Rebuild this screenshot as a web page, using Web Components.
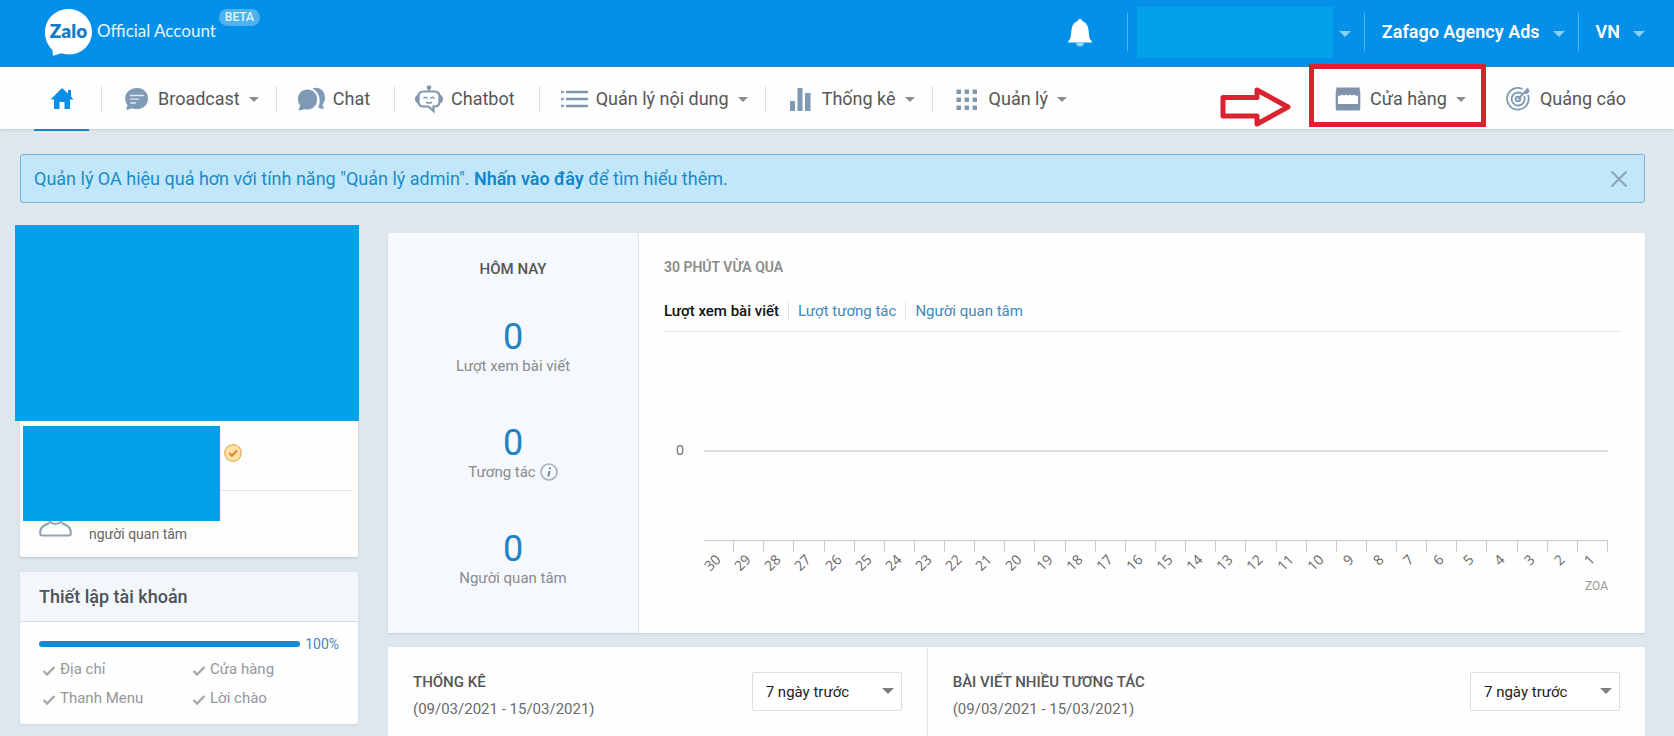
<!DOCTYPE html>
<html lang="vi">
<head>
<meta charset="utf-8">
<meta name="viewport" content="width=device-width, initial-scale=1">
<title>Zalo Official Account</title>
<style>
  body { margin: 0; background: #dfe7ee; font-family: Roboto, "Liberation Sans", sans-serif; font-size: 15px; line-height: 20px; color: #555; }
  .workspace { display: grid; grid-template-columns: 344px minmax(0, 1fr); column-gap: 29px; padding: 22px 29px 0 15px; align-items: start; }
  .side { display: grid; gap: 15px; }
  .main { display: grid; gap: 14px; padding-top: 8px; }
  .panels { display: grid; grid-template-columns: 3fr 4fr; background: #fefefe; border-radius: 2px; }
  oa-panel + oa-panel { border-left: 1px solid #dfe5ea; }
</style>
</head>
<body>
<oa-header>
  <oa-brand></oa-brand>
  <oa-bell></oa-bell>
  <header-menu label="Tài khoản"><account-mask></account-mask></header-menu>
  <header-menu>Zafago Agency Ads</header-menu>
  <header-menu>VN</header-menu>
</oa-header>
<oa-nav>
  <nav-home></nav-home>
  <nav-item icon="broadcast" menu>Broadcast</nav-item>
  <nav-item icon="chat">Chat</nav-item>
  <nav-item icon="bot">Chatbot</nav-item>
  <nav-item icon="list" menu>Quản lý nội dung</nav-item>
  <nav-item icon="bars" menu>Thống kê</nav-item>
  <nav-item icon="grid" menu>Quản lý</nav-item>
  <nav-callout slot="end"><nav-item icon="store" menu plain>Cửa hàng</nav-item></nav-callout>
  <nav-item slot="end" icon="target" plain>Quảng cáo</nav-item>
</oa-nav>
<oa-notice>Quản lý OA hiệu quả hơn với tính năng "Quản lý admin". <a slot="link" href="#admin">Nhấn vào đây</a><span slot="rest"> để tìm hiểu thêm.</span></oa-notice>
<div class="workspace">
  <div class="side">
    <profile-card>người quan tâm</profile-card>
    <setup-card heading="Thiết lập tài khoản" value="100">
      <setup-step>Địa chỉ</setup-step>
      <setup-step>Cửa hàng</setup-step>
      <setup-step>Thanh Menu</setup-step>
      <setup-step>Lời chào</setup-step>
    </setup-card>
  </div>
  <div class="main">
    <oa-overview>
      <today-stat slot="today" value="0">Lượt xem bài viết</today-stat>
      <today-stat slot="today" value="0" info>Tương tác</today-stat>
      <today-stat slot="today" value="0">Người quan tâm</today-stat>
      <minute-chart></minute-chart>
    </oa-overview>
    <div class="panels">
      <oa-panel heading="THỐNG KÊ">(09/03/2021 - 15/03/2021)</oa-panel>
      <oa-panel heading="BÀI VIẾT NHIỀU TƯƠNG TÁC">(09/03/2021 - 15/03/2021)</oa-panel>
    </div>
  </div>
</div>

<script>
const define = (name, render) => customElements.define(name, class extends HTMLElement {
  constructor() {
    super();
    this.attachShadow({ mode: 'open' });
  }
  connectedCallback() {
    this.shadowRoot.innerHTML = `<style>*{box-sizing:border-box}button{font:inherit;color:inherit;background:none;border:0;padding:0;cursor:pointer}</style>` + render(this);
  }
});

const icons = {
  broadcast: `<path fill="#7f9ab5" d="M15 2C8.300 2 3.200 6.500 3.200 12.400c0 2.600.9 4.800 2.400 6.600L4 23.600c2 .2 3.900-.2 5.600-1.300 1.700.6 3.500.8 5.400.8 6.500 0 11-4.500 11-10.600S21.500 2 15 2z"/><path d="M8.500 9.500h13M8.500 13.200h8M8.500 17h5" stroke="#dfe9f1" stroke-width="1.300" stroke-linecap="round"/>`,
  chat: `<path fill="#7f9ab5" d="M15.500 2.600C21-.2 28 3.800 28 11.500c0 3-1 5.500-2.600 7.200l1.600 4.100c-2.500.1-4.400-.5-5.700-1.300 2.700-5.700 1.800-15-5.800-18.900z"/><path fill="#7f9ab5" d="M10.500 3.500C5 3.500.9 7.500.9 13.200c0 2.600.9 4.700 2.300 6.300L1.500 24.200c2.200.3 4.200-.4 5.400-1.300 1.200.4 2.400.6 3.600.6 5.600 0 9.700-4.400 9.700-10.200s-4.400-9.800-9.700-9.800z"/>`,
  bot: `<g fill="none" stroke="#8298ad" stroke-width="2.200"><path d="M8.500 5.500h11c3 0 5 2 5 5v5c0 3-2 5-5 5h-1v4.500l-5-4.500h-5c-3 0-5-2-5-5v-5c0-3 2-5 5-5zM14 5V2"/><path d="M8.500 12.500q2-2.500 4 0M15.500 12.500q2-2.500 4 0M11 16.300q3 1.500 6 0" stroke-width="1.600"/></g><circle cx="14" cy="1.500" r="2.300" fill="#8298ad"/><path fill="#8298ad" d="M3 8.500c-4 1-4 8 0 9zM25 8.500c4 1 4 8 0 9z"/>`,
  list: `<path d="M7 6h20M7 13h20M7 20h20" stroke="#7f94ab" stroke-width="2.400" stroke-linecap="round"/><path d="M1 6h3M1 13h3M1 20h3" stroke="#92a3b4" stroke-width="2.400"/>`,
  bars: `<path fill="#7f9ab5" d="M4 15h5v10H4zM11.500 2h5v23h-5zM19 7h5.500v18H19z"/>`,
  grid: `<path fill="#8298ad" d="M3.500 3.500H8V8H3.500zM11.500 3.500H16V8h-4.500zM19.500 3.500H24V8h-4.500zM3.500 11.500H8V16H3.500zM11.500 11.500H16V16h-4.500zM19.500 11.500H24V16h-4.500zM3.500 19.500H8V24H3.500zM11.500 19.500H16V24h-4.500zM19.500 19.500H24V24h-4.500z"/>`,
  store: `<path fill="#7f94ab" d="M2.500 1.500h23l.8 6v15.500q0 1.500-1.500 1.500H3.200q-1.500 0-1.500-1.500V7.500z"/><path fill="#fff" d="M4 9.500q2 1 4-1 2 1.800 4 0 2 1.800 4 0 2 1.800 4 0 2 2 4 1V18H4z"/>`,
  target: `<g fill="none" stroke="#7f9ab5" stroke-width="1.800"><path d="M24 9a10.800 10.800 0 1 1-5.500-6"/><path d="M18.500 8.200a6.500 6.500 0 1 0 1.500 2"/><circle cx="14" cy="13" r="2.300"/><path d="M14 13 24.500 2.500"/></g><path d="m19.500 6.500 4.500-5v3h2.500l-4 4z" fill="#7f9ab5"/>`
};

define('oa-header', () => `<style>
  :host { display: flex; align-items: center; height: 67px; box-sizing: border-box; padding: 0 29px 2px 45px; background: #048fe8; border-bottom: 1px solid #1d83c2; color: #fff; }
  ::slotted(oa-brand) { margin-right: auto; }
</style><slot></slot>`);

define('oa-brand', () => `<style>
  :host { display: block; }
  a { display: flex; align-items: center; color: #fff; text-decoration: none; }
  .mark { display: grid; place-items: center; width: 47px; height: 48px; margin-right: 5px; }
  .mark > * { grid-area: 1 / 1; }
  b { font: 800 19px/20px Lato, sans-serif; color: #127cc6; padding-bottom: 3px; }
  .name { padding-bottom: 3px; font: 17px/24px Lato, sans-serif; color: #e6f6ff; -webkit-text-stroke: 0; }
  .beta { align-self: flex-start; margin: 1px 0 0 3px; padding: 0 6px; border-radius: 9px; background: #4fb2ee; font-size: 12px; line-height: 17px; font-weight: 500; color: #e2f4ff; }
</style><a href="#home"><span class="mark"><svg width="47" height="48" viewBox="0 0 47 48" aria-hidden="true"><path fill="#fff" d="M23.500 1C36 1 47 11 47 23.800S37 46.500 24 46.500c-3 0-5.500-.5-7.500-1.200L8 47.800l-.8-6.300C2.500 37.500 0 31 0 24.500 0 11 10.500 1 23.500 1z"/></svg><b>Zalo</b></span><span class="name">Official Account</span><span class="beta">BETA</span></a>`);

define('oa-bell', () => `<style>
  :host { display: block; margin: 2px 22px 0 0; }
  button, svg { display: block; }
</style><button aria-label="Thông báo"><svg width="24" height="28" viewBox="0 0 24 28"><path fill="#fff" d="M12 0c1.500 0 2.200 1 2.400 2.200C18.500 3.500 20 7 20.500 11l1 8c.5 2 2.500 2.500 2.500 4.500H0c0-2 2-2.500 2.500-4.500l1-8C4 7 5.500 3.500 9.600 2.200 9.800 1 10.500 0 12 0z"/><path fill="#8edcff" d="M8 24h8c-.5 2-2 3.500-4 3.500S8.500 26 8 24z"/></svg></button>`);

define('header-menu', el => `<style>
  :host { display: block; position: relative; font-size: 18px; line-height: 24px; font-weight: 600; margin-left: 13px; border-left: 1px solid #4fb2ee; }
  button { display: flex; align-items: center; height: 38px; padding-left: ${el.getAttribute('label') ? 9 : 17}px; gap: ${el.getAttribute('label') ? 6 : 13}px; }
  i { border: 6px solid transparent; border-top: 6px solid #8bd0f6; border-bottom: 0; margin-top: 4px; }
</style><button ${el.getAttribute('label') ? `aria-label="${el.getAttribute('label')}"` : ''}><slot></slot><i></i></button>`);

define('account-mask', () => `<style>:host { display: block; width: 196px; height: 51px; background: #02a1ea; }</style>`);

define('oa-nav', () => `<style>
  :host { display: flex; align-items: center; height: 62px; box-sizing: border-box; padding: 2px 24px 0 34px; background: #fefefe; box-shadow: 0 1px 2px #c3ccd0; }
  .end { display: flex; align-items: center; margin-left: auto; }
</style><slot></slot><div class="end"><slot name="end"></slot></div>`);

define('nav-home', () => `<style>
  :host { display: block; margin-right: 12px; align-self: stretch; }
  a { display: grid; place-items: center; width: 55px; height: 62px; border-bottom: 2px solid #1a84c2; }
</style><a href="#home" aria-label="Trang chủ"><svg width="24" height="24" viewBox="0 0 24 24"><path fill="#0a8ee6" d="M12 1 18 6.500V3h3v6.500l2.500 3H20V22h-5.500v-7h-5v7H4v-9.500H.5z"/></svg></a>`);

define('nav-item', el => `<style>
  :host { display: block; color: #565656; font-size: 18px; line-height: 26px; }
  a { display: flex; align-items: center; gap: 8px; height: 26px; padding: 0 ${el.hasAttribute('menu') ? 17 : 24}px 0 20px; color: inherit; text-decoration: none; border-left: 1px solid ${el.hasAttribute('plain') ? 'transparent' : '#dcdfe2'}; white-space: nowrap; }
  svg { display: block; overflow: visible; }
  i { border: 5px solid transparent; border-top: 5px solid #8c8c8c; border-bottom: 0; margin-left: 1px; }
</style><a href="#${el.getAttribute('icon')}"><svg width="28" height="26" viewBox="0 0 28 26" aria-hidden="true">${icons[el.getAttribute('icon')]}</svg><span><slot></slot></span>${el.hasAttribute('menu') ? '<i></i>' : ''}</a>`);

define('nav-callout', () => `<style>
  :host { display: block; position: relative; }
  .frame { position: absolute; inset: -22px -3px -15px -4px; border: 5px solid #d9232e; pointer-events: none; }
  svg { position: absolute; right: calc(100% + 21px); top: 0; }
</style><slot></slot><div class="frame"></div>
<svg width="73" height="42" viewBox="0 0 73 42" aria-hidden="true"><path fill="none" stroke="#d9232e" stroke-width="5" stroke-linejoin="round" d="M4 11.500h34V4l31 17-31 17v-8H4z"/></svg>`);

define('oa-notice', () => `<style>
  :host { display: flex; align-items: center; height: 49px; box-sizing: border-box; margin: 25px 29px 0 20px; padding: 0 16px 0 13px; background: #c2e6fa; border: 1px solid #79b3da; border-radius: 3px; color: #1b8cc6; font-size: 18px; line-height: 24px; }
  ::slotted(a) { color: #1486c8; font-weight: 600; text-decoration: none; }
  p { margin: 0 auto 0 0; }
  button, svg { display: block; }
</style><p><slot></slot><slot name="link"></slot><slot name="rest"></slot></p>
<button aria-label="Đóng"><svg width="18" height="18" viewBox="0 0 18 18"><path d="M1.500 1.500l15 15M16.500 1.500l-15 15" stroke="#87a6ba" stroke-width="2"/></svg></button>`);

define('profile-card', () => `<style>
  :host { display: block; }
  .cover { height: 196px; background: #02a1ea; }
  .body { display: grid; grid-template-columns: 197px 1fr; margin: 0 1px 0 5px; padding: 5px 6px 13px 3px; background: #fefefe; border-radius: 0 0 2px 2px; box-shadow: 0 1px 2px #b9c3c9; }
  .name { height: 95px; background: #02a1ea; }
  .status { height: 65px; padding: 18px 0 0 4px; border-bottom: 1px solid #dfe5e5; }
  .fans { grid-column: 1 / -1; display: flex; gap: 17px; padding-left: 16px; color: #666; }
  .fans span { padding-top: 3px; font-size: 14px; line-height: 20px; }
  svg { display: block; }
</style><div class="cover"></div><div class="body"><div class="name"></div>
<div class="status"><svg width="18" height="18" viewBox="0 0 18 18" role="img" aria-label="Đã xác thực"><circle cx="9" cy="9" r="8.300" fill="#ffe2a6" stroke="#e3b063" stroke-width="1.300"/><path d="m5.300 9 2.700 2.700L13 6.500" fill="none" stroke="#df8436" stroke-width="2"/></svg></div>
<div class="fans"><svg width="33" height="17" viewBox="0 0 33 17" aria-hidden="true"><path d="M10.500 2C5.500 4 1.200 6 1.200 11v1.500q0 2 2 2h26.600q2 0 2-2V11c0-5-4.300-7-9.300-9M10 0q6.500 6 13 0" fill="none" stroke="#8fa3b5" stroke-width="2"/></svg><span><slot></slot></span></div></div>`);

define('setup-card', el => `<style>
  :host { display: block; margin: 0 1px 0 5px; background: #fefefe; border-radius: 3px; box-shadow: 0 1px 2px #c9d2d8; }
  h2 { margin: 0; padding: 12px 19px; border-bottom: 1px solid #d5dde3; background: #f3f7fc; font-size: 18px; line-height: 25px; font-weight: 500; color: #4d5359; }
  .meter { display: flex; align-items: center; gap: 5px; padding: 12px 19px 0; line-height: 20px; font-size: 14px; color: #4a86bd; }
  progress { appearance: none; flex: 1; min-width: 0; height: 6px; border: 0; border-radius: 3px; overflow: hidden; background: #dfe7ee; }
  progress::-webkit-progress-bar { background: #dfe7ee; }
  progress::-webkit-progress-value { background: #168ad2; }
  .steps { display: grid; grid-template-columns: 150px 1fr; row-gap: 9px; padding: 5px 19px 16px 22px; }
</style><h2>${el.getAttribute('heading')}</h2><div class="meter"><progress id="p" max="100" value="${el.getAttribute('value')}"></progress><label for="p">${el.getAttribute('value')}%</label></div><div class="steps"><slot></slot></div>`);

define('setup-step', () => `<style>
  :host { display: flex; align-items: center; gap: 4px; font-size: 15px; line-height: 20px; color: #969696; }
  svg { margin-top: 4px; }
</style><svg width="14" height="12" viewBox="0 0 14 12" aria-hidden="true"><path d="m1.500 6 3.500 3.500L12.500 2" fill="none" stroke="#a3a9ad" stroke-width="2.400"/></svg><span><slot></slot></span>`);

define('oa-overview', () => `<style>
  :host { display: grid; grid-template-columns: 251px minmax(0, 1fr); background: #fefefe; border-radius: 2px; box-shadow: 0 1px 2px #c3ced5; }
  .today { display: grid; align-content: start; justify-items: center; padding-bottom: 36px; background: #f5f9fd; border-right: 1px solid #dde4ea; }
  h2 { margin: 26px 0 0; font-size: 15px; line-height: 20px; font-weight: 500; color: #555; }
</style><section class="today"><h2>HÔM NAY</h2><slot name="today"></slot></section><slot></slot>`);

define('today-stat', el => `<style>
  :host { display: grid; justify-items: center; padding-top: 40px; }
  strong { font-weight: 400; font-size: 36px; line-height: 37px; color: #1c84c4; }
  .label { display: flex; align-items: center; gap: 4px; height: 20px; margin-bottom: 9px; font-size: 15px; line-height: 20px; color: #8a8a8a; }
</style><strong>${el.getAttribute('value')}</strong><span class="label"><slot></slot>${el.hasAttribute('info') ? '<svg width="18" height="18" viewBox="0 0 18 18" role="img" aria-label="Thông tin"><circle cx="9" cy="9" r="8" fill="none" stroke="#a3b1c0" stroke-width="1.600"/><path d="M10 4.500v1.800M9.600 8 8.300 13.500" stroke="#6f8aa6" stroke-width="2"/></svg>' : ''}</span>`);

define('minute-chart', () => `<style>
  :host { display: block; padding: 24px 25px 0; }
  h2 { margin: 0; font-size: 14px; line-height: 20px; font-weight: 600; color: #8b8b8b; }
  .tabs { display: flex; align-items: center; height: 55px; padding-top: 13px; border-bottom: 1px solid #e3e7ea; }
  .tabs button { height: 20px; padding: 0 9px; font-size: 15px; line-height: 20px; color: #3f88b8; border-left: 1px solid #e0e4e8; }
  .tabs button:first-child { padding-left: 0; border: 0; color: #111; font-weight: 500; }
  .plot { display: grid; grid-template-columns: 40px 1fr; margin-right: 12px; padding-top: 108px; font: 14px/20px "Open Sans", sans-serif; color: #666; }
  .zero { padding-left: 12px; }
  .line { height: 91px; margin-top: 10px; border-top: 2px solid #d9dee1; border-bottom: 1px solid #c8cccf; }
  .axis { grid-column: 2; display: grid; grid-template-columns: repeat(30, 1fr); }
  .axis span { height: 11px; border-right: 1px solid #c8cccf; padding: 8px 50% 0 0; display: flex; justify-content: flex-end; }
  .axis b { font-weight: 400; line-height: 16px; height: 16px; transform: rotate(-45deg); transform-origin: right center; }
  .credit { grid-column: 2; margin-top: 24px; text-align: right; font: 12px/20px Roboto, sans-serif; color: #999; }
</style><h2>30 PHÚT VỪA QUA</h2>
<div class="tabs"><button>Lượt xem bài viết</button><button>Lượt tương tác</button><button>Người quan tâm</button></div>
<div class="plot"><span class="zero">0</span><div class="line"></div><div class="axis">${Array.from({ length: 30 }, (_, i) => `<span><b>${30 - i}</b></span>`).join('')}</div><div class="credit">ZOA</div></div>`);

define('oa-panel', el => `<style>
  :host { display: flex; justify-content: space-between; align-items: flex-start; padding: 25px 25px 40px; }
  h2 { margin: 0; font-size: 15px; line-height: 20px; font-weight: 500; color: #555; }
  p { margin: 7px 0 0; font-size: 15px; line-height: 20px; color: #6b6b6b; }
  .pick { position: relative; display: block; }
  .pick::after { content: ""; position: absolute; right: 8px; top: 16px; border: 6px solid transparent; border-top-color: #808080; border-bottom: 0; pointer-events: none; }
  select { appearance: none; display: block; width: 150px; height: 39px; padding: 0 13px; border: 1px solid #dadfe3; border-radius: 2px; background: #fff; font: 15px/20px Roboto, sans-serif; color: #1c1c1c; }
</style><div><h2>${el.getAttribute('heading')}</h2><p><slot></slot></p></div>
<label class="pick"><select aria-label="Khoảng thời gian"><option>7 ngày trước</option></select></label>`);
</script>
</body>
</html>
